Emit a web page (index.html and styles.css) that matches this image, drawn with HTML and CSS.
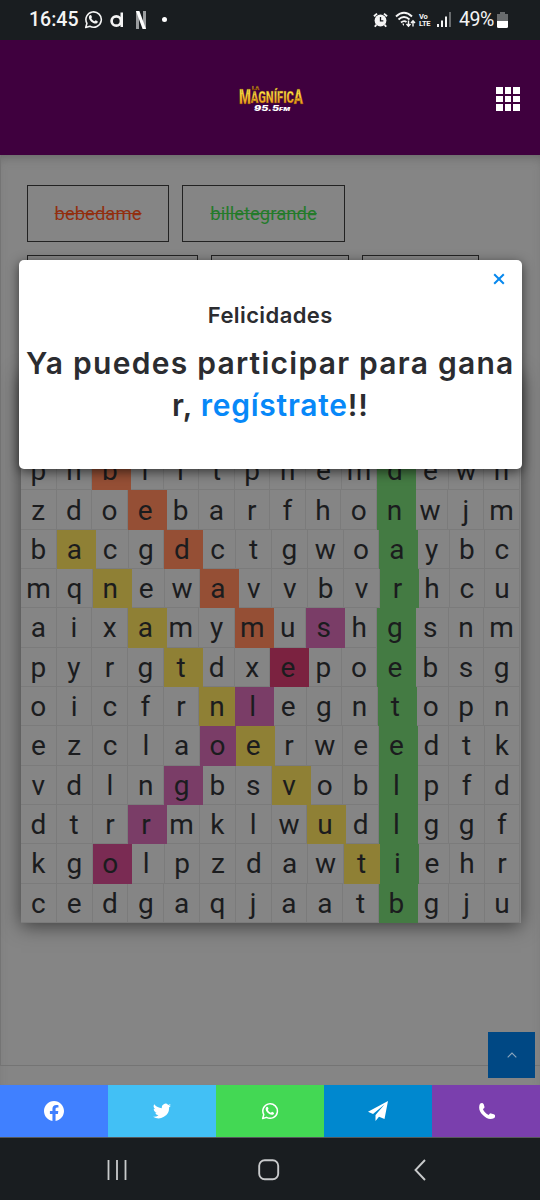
FILE: index.html
```html
<!DOCTYPE html>
<html lang="es">
<head>
<meta charset="utf-8">
<title>La Magnífica 95.5 FM</title>
<link rel="stylesheet" href="styles.css">
</head>
<body>
<svg class="defs" aria-hidden="true">
  <symbol id="whatsapp" viewBox="0 0 24 24"><path d="M2.2 22l1.5-5.2A9.7 9.7 0 1 1 7.400 20.500Z" fill="none" stroke="currentColor" stroke-width="2" stroke-linejoin="round"/><path d="M7.300 6.700c.9-.8 1.600-.6 2 .4l.7 1.700c.2.500-.8 1.300-.7 1.700.7 1.800 2.100 3 3.900 3.700.5.200 1.100-1.300 1.700-1.100l2.200 1.100c.9.500-.1 2.400-1.500 2.800-3.600 1-9.900-4.200-9.400-8.200.1-.9.600-1.700 1.100-2.100Z" fill="currentColor"/></symbol>
</svg>
<div class="screen">
  <div class="status">
    <div class="status-side">
      <span class="clock">16:45</span>
      <svg class="st-wa"><use href="#whatsapp"/></svg>
      <svg class="st-d" viewBox="0 0 14 16"><circle cx="6.300" cy="9.500" r="4.700" fill="none" stroke="currentColor" stroke-width="2.700"/><path d="M10.500 1H13v14.500h-2.500z" fill="currentColor"/></svg>
      <svg class="st-n" viewBox="0 0 10 18"><path d="M0 0h3v18H0zM7 0h3v18H7z" fill="#9b9d9f"/><path d="M0 0h3.400L10 18H6.600z" fill="#fff"/></svg>
      <i class="dot"></i>
    </div>
    <div class="status-side status-right">
      <svg class="st-alarm" viewBox="0 0 16 16"><circle cx="8" cy="8.500" r="6.300" fill="currentColor"/><path d="M1 4L4.300 1.200M15 4l-3.300-2.800M3.500 13L2 15.200M12.500 13l1.500 2.200" stroke="currentColor" stroke-width="2"/><path d="M8 4.800V9h3" fill="none" stroke="#191d20" stroke-width="1.400"/></svg>
      <svg class="st-wifi" viewBox="0 0 21 17"><g fill="none" stroke="currentColor" stroke-width="1.900"><path d="M1 5.500Q9 -2 17 5.500M3.500 8.500Q9 3.500 14.500 8.500M6 11.500Q9 9 11.500 11"/></g><path d="M9 12.500l-2 .2L9 15z" fill="currentColor"/><path d="M13.500 9.500V15m-2-2l2 2.300 2-2.300M18 15.500V10m-2 2l2-2.300 2 2.300" fill="none" stroke="currentColor" stroke-width="1.400"/></svg>
      <span class="lte"><b>Vo</b><b>LTE</b></span>
      <svg class="st-signal" viewBox="0 0 15 15"><path d="M0 12h2v3H0zM4 8.500h2V15H4zM8 4.500h2V15H8z" fill="currentColor"/><path d="M12 0h2v15h-2z" fill="#686b6d"/></svg>
      <span class="percent">49%</span>
      <svg class="st-bat" viewBox="0 0 11 16"><path d="M3 0h5v2h3v7H0V2h3z" fill="#686b6d"/><path d="M0 9h11v5.500q0 1.500-1.500 1.500h-8Q0 16 0 14.500z" fill="#fff"/></svg>
    </div>
  </div>

  <header class="header">
    <svg class="logo" viewBox="0 0 66 30">
      <defs><linearGradient id="gold" x1="0" y1="0" x2="0" y2="1"><stop offset=".25" stop-color="#ffe84a"/><stop offset=".85" stop-color="#e98c12"/></linearGradient></defs>
      <g class="logo-gold">
        <text x="14" y="6.500" font-size="6" textLength="7" lengthAdjust="spacingAndGlyphs">LA</text>
        <text x="1" y="21" textLength="64" lengthAdjust="spacingAndGlyphs"><tspan font-size="20">M</tspan><tspan font-size="16.500" dy="-1.500">AGNÍFIC</tspan><tspan font-size="20" dy="1.500">A</tspan></text>
      </g>
      <text class="logo-fm" x="16" y="27.500" textLength="36" lengthAdjust="spacingAndGlyphs"><tspan font-size="7.500">95.5</tspan><tspan font-size="5">FM</tspan></text>
    </svg>
    <div class="menu"><i></i><i></i><i></i><i></i><i></i><i></i><i></i><i></i><i></i></div>
  </header>

  <main class="page">
    <section class="content">
      <div class="words">
        <span class="word w-red">bebedame</span><span class="word w-green">billetegrande</span>
      </div>
      <div class="words words-next">
        <span class="word long"></span><span class="word medium"></span><span class="word short"></span>
      </div>
      <div class="puzzle" id="puzzle"></div>
    </section>

    <div class="top-button"><svg viewBox="0 0 10 6"><path d="M.7 5.300L5 1l4.300 4.300" fill="none" stroke="currentColor" stroke-width="1.100"/></svg></div>

    <div class="modal">
      <svg class="close" viewBox="0 0 12 12"><path d="M1.200 1.200l9.600 9.600M10.800 1.200l-9.600 9.600" stroke="currentColor" stroke-width="2"/></svg>
      <h2>Felicidades</h2>
      <p class="line-one">Ya puedes participar para gana</p>
      <p class="line-two">r, <a>regístrate</a>!!</p>
    </div>
  </main>

  <footer class="share">
    <span class="facebook"><svg viewBox="0 0 24 24"><path fill="currentColor" d="M24 12.070C24 5.400 18.630 0 12 0S0 5.400 0 12.070C0 18.100 4.390 23.090 10.130 24v-8.440H7.080v-3.490h3.050V9.410c0-3.020 1.790-4.690 4.530-4.690 1.310 0 2.690.24 2.690.24v2.970h-1.520c-1.490 0-1.960.93-1.960 1.890v2.250h3.330l-.53 3.490h-2.800V24C19.610 23.090 24 18.100 24 12.070z"/></svg></span>
    <span class="twitter"><svg viewBox="0 0 24 24"><path fill="currentColor" d="M24 4.600a10 10 0 0 1-2.800.8 4.900 4.900 0 0 0 2.200-2.700 10 10 0 0 1-3.100 1.200 4.900 4.900 0 0 0-8.400 4.500A14 14 0 0 1 1.700 3.100a4.900 4.900 0 0 0 1.500 6.600 5 5 0 0 1-2.200-.6 4.900 4.900 0 0 0 3.900 4.900 5 5 0 0 1-2.200.1 4.900 4.900 0 0 0 4.600 3.400A10 10 0 0 1 0 19.500 14 14 0 0 0 21.500 7.100 10 10 0 0 0 24 4.600z"/></svg></span>
    <span class="whatsapp"><svg><use href="#whatsapp"/></svg></span>
    <span class="telegram"><svg viewBox="0 0 20 20"><path fill="currentColor" d="M20 0L0 10.800l5 2.200L16.500 3.500 7.500 14v6l3.500-4.300 5.500 2.300z"/></svg></span>
    <span class="phone"><svg viewBox="0 0 16 16"><path fill="currentColor" d="M1 .8Q3.500-.8 4.700 1.300L5.500 4Q5.600 5.400 3.900 6q1.600 4.200 5.900 6 .7-1.900 2.300-1.600l2.700.8q2.300 1 .6 3.700-6 3-11.300-2.600Q-1.700 6.500 1 .8z"/></svg></span>
  </footer>

  <nav class="nav">
    <svg class="recent" viewBox="0 0 20 20"><path d="M1.500 0v20M10 0v20M18.500 0v20" stroke="currentColor" stroke-width="1.800"/></svg>
    <svg class="home" viewBox="0 0 22 22"><rect x="1.200" y="1.200" width="19" height="19" rx="5.500" fill="none" stroke="currentColor" stroke-width="1.900"/></svg>
    <svg class="back" viewBox="0 0 12 22"><path d="M11 1L1.500 11 11 21" fill="none" stroke="currentColor" stroke-width="1.900"/></svg>
  </nav>
</div>
<script src="puzzle.js"></script>
</body>
</html>
```
FILE: styles.css
```css
* { box-sizing: border-box; }
body { margin: 0; background: #191d20; font-family: Roboto, sans-serif; }
.defs { position: absolute; width: 0; height: 0; }
.screen { width: 540px; height: 1200px; display: flex; flex-direction: column; overflow: hidden; }

.status { height: 40px; flex: none; display: flex; justify-content: space-between; align-items: center; padding: 0 30px 1px 29px; color: #f4f4f4; background: #191d20; }
.status-side { display: flex; align-items: center; }
.clock, .percent { font-size: 19.500px; font-weight: 500; line-height: 20px; }
.clock { width: 55px; }
.st-wa { width: 19px; height: 19px; }
.st-d { width: 14px; height: 17px; margin-left: 7px; }
.st-n { width: 10px; height: 18px; margin-left: 12px; }
.dot { width: 5px; height: 5px; border-radius: 50%; background: #fff; margin-left: 16px; }
.status-right { width: 137px; }
.st-alarm { width: 15px; height: 16px; }
.st-wifi { width: 21px; height: 17px; margin-left: 7px; }
.lte { width: 13px; margin-left: 3px; font-size: 7.500px; line-height: 7px; display: grid; letter-spacing: -.3px; }
.st-signal { width: 15px; height: 15px; margin-left: 5px; }
.percent { margin-left: 7px; width: 38px; font-weight: 400; letter-spacing: -.4px; }
.st-bat { width: 11px; height: 16px; flex: none; }

.header { height: 115px; flex: none; display: flex; align-items: center; justify-content: flex-end; padding: 0 20px 0 0; background: #3f003e; }
.logo { width: 66px; height: 30px; margin-right: 192px; overflow: visible; }
.logo-gold text { font-family: Roboto, sans-serif; font-weight: 900; fill: url(#gold); stroke: #6b3900; stroke-width: .3px; }
.logo-fm { font-family: Inter, sans-serif; font-weight: 900; font-style: italic; fill: #fff; }
.menu { width: 24px; display: grid; grid-template-columns: repeat(3, 6.500px); gap: 2.200px; padding-top: 3px; }
.menu i { height: 6.500px; background: #fff; }

.page { position: relative; height: 930px; flex: none; background: #858585; overflow: hidden; box-shadow: inset 0 7px 12px -6px #606060; }
.content { height: 911px; padding: 30px 19px 0 26px; border-left: 1px solid #747474; border-bottom: 1px solid #747474; }
.words { display: flex; gap: 13px; height: 57px; }
.words-next { margin-top: 13px; }
.word { height: 57px; padding: 0 26px; display: flex; align-items: center; justify-content: center; border: 1px solid #222; font-size: 18.500px; text-decoration: line-through; }
.w-red { width: 142px; color: #922f10; }
.w-green { width: 163px; color: #247b2a; }
.long { width: 171px; }
.medium { width: 138px; }
.short { width: 117px; }

.puzzle { width: 500px; margin: 60px 0 0 -6px; padding-top: 79px; background: #858585; box-shadow: 0 3px 18px rgba(0,0,0,.55); }
.row { display: grid; height: 39.330px; grid-template-columns: repeat(10, calc(var(--lead) / 10)) repeat(4, calc((499px - var(--lead)) / 4)); }
.cell { height: 39.330px; padding-top: 2px; border: 1px solid #7b7b7b; border-width: 0 1px 1px 0; display: flex; align-items: center; justify-content: center; font-size: 28px; color: #1b1c1e; line-height: 38px; }
.hit { width: 39px; padding-right: 3px; border-color: transparent; z-index: 1; }
.orange { background: #954f35; }
.yellow { background: #8f8035; }
.green { background: #447b43; }
.pink { background: #7a3d67; }
.crimson { background: #7b2240; }
.plum { background: #7a2b53; }

.top-button { position: absolute; right: 5px; bottom: 7px; width: 47px; height: 46px; display: grid; place-items: center; background: #004884; color: #8ba6bd; }
.top-button svg { width: 10px; height: 6px; }

.modal { position: absolute; left: 19px; top: 104.500px; width: 502.500px; height: 209px; z-index: 3; border-radius: 5px; background: #fff; box-shadow: 0 3px 12px rgba(0,0,0,.6); color: #2b2c30; font-family: Inter, sans-serif; font-weight: 600; text-align: center; padding-top: 40px; }
.close { position: absolute; right: 17px; top: 13px; width: 12px; height: 12px; color: #0788ee; }
.modal h2 { margin: 0; font-size: 22px; line-height: 30px; font-weight: 600; letter-spacing: .4px; }
.modal p { margin: 0; font-size: 30px; line-height: 42px; white-space: nowrap; }
.modal .line-one { margin-top: 12px; letter-spacing: 1.250px; }
.modal .line-two { letter-spacing: .750px; }
.modal a { color: #0788f8; }

.share { height: 53px; flex: none; display: grid; grid-template-columns: repeat(5, 1fr); border-bottom: 1px solid #55585a; color: #fff; }
.share span { display: grid; place-items: center; }
.facebook { background: #4080ff; }
.twitter { background: #42c0f5; }
.whatsapp { background: #43d854; }
.telegram { background: #0088cf; }
.phone { background: #7a3fad; }
.share svg { width: 18px; height: 18px; }
.share .facebook svg { width: 20px; height: 20px; }
.share .telegram svg { width: 20px; height: 20px; }
.share .phone svg { width: 16px; height: 16px; margin-left: 2px; }

.nav { height: 62px; display: flex; align-items: center; padding: 2px 114px 0 107px; color: #c8cacb; }
.recent { width: 20px; height: 20px; }
.home { width: 22px; height: 22px; margin-left: 131px; }
.back { width: 12px; height: 22px; margin-left: auto; }
```
FILE: puzzle.js
```js
// Each row: letters, offset of the eleventh column, found cells (column: colour).
const rows = [
  ["pnbfftpnemdewn", 356.5, { 2: "orange", 10: "green" }],
  ["zdoebarfhonwjm", 356, { 3: "orange", 10: "green" }],
  ["bacgdctgwoaybc", 358.5, { 1: "yellow", 4: "orange", 10: "green" }],
  ["mqnewavvbvrhcu", 359, { 2: "yellow", 5: "orange", 10: "green" }],
  ["aixamymushgsnm", 356.5, { 3: "yellow", 6: "orange", 8: "pink", 10: "green" }],
  ["pyrgtdxepoebsg", 356.5, { 4: "yellow", 7: "crimson", 10: "green" }],
  ["oicfrnlegntopn", 357, { 5: "yellow", 6: "pink", 10: "green" }],
  ["ezclaoerweedtk", 358, { 5: "pink", 6: "yellow", 10: "green" }],
  ["vdlngbsvoblpfd", 358, { 4: "pink", 7: "yellow", 10: "green" }],
  ["dtrrmklwudlggf", 358, { 3: "pink", 8: "yellow", 10: "green" }],
  ["kgolpzdawtiehr", 359, { 2: "plum", 9: "yellow", 10: "green" }],
  ["cedgaqjaatbgju", 358, { 10: "green" }]
];
const puzzle = document.getElementById("puzzle");
for (const [letters, lead, hits] of rows) {
  const row = document.createElement("div");
  row.className = "row";
  row.style.setProperty("--lead", lead + "px");
  [...letters].forEach((letter, i) => {
    const cell = document.createElement("span");
    cell.className = hits[i] ? "cell hit " + hits[i] : "cell";
    cell.textContent = letter;
    row.append(cell);
  });
  puzzle.append(row);
}
```
